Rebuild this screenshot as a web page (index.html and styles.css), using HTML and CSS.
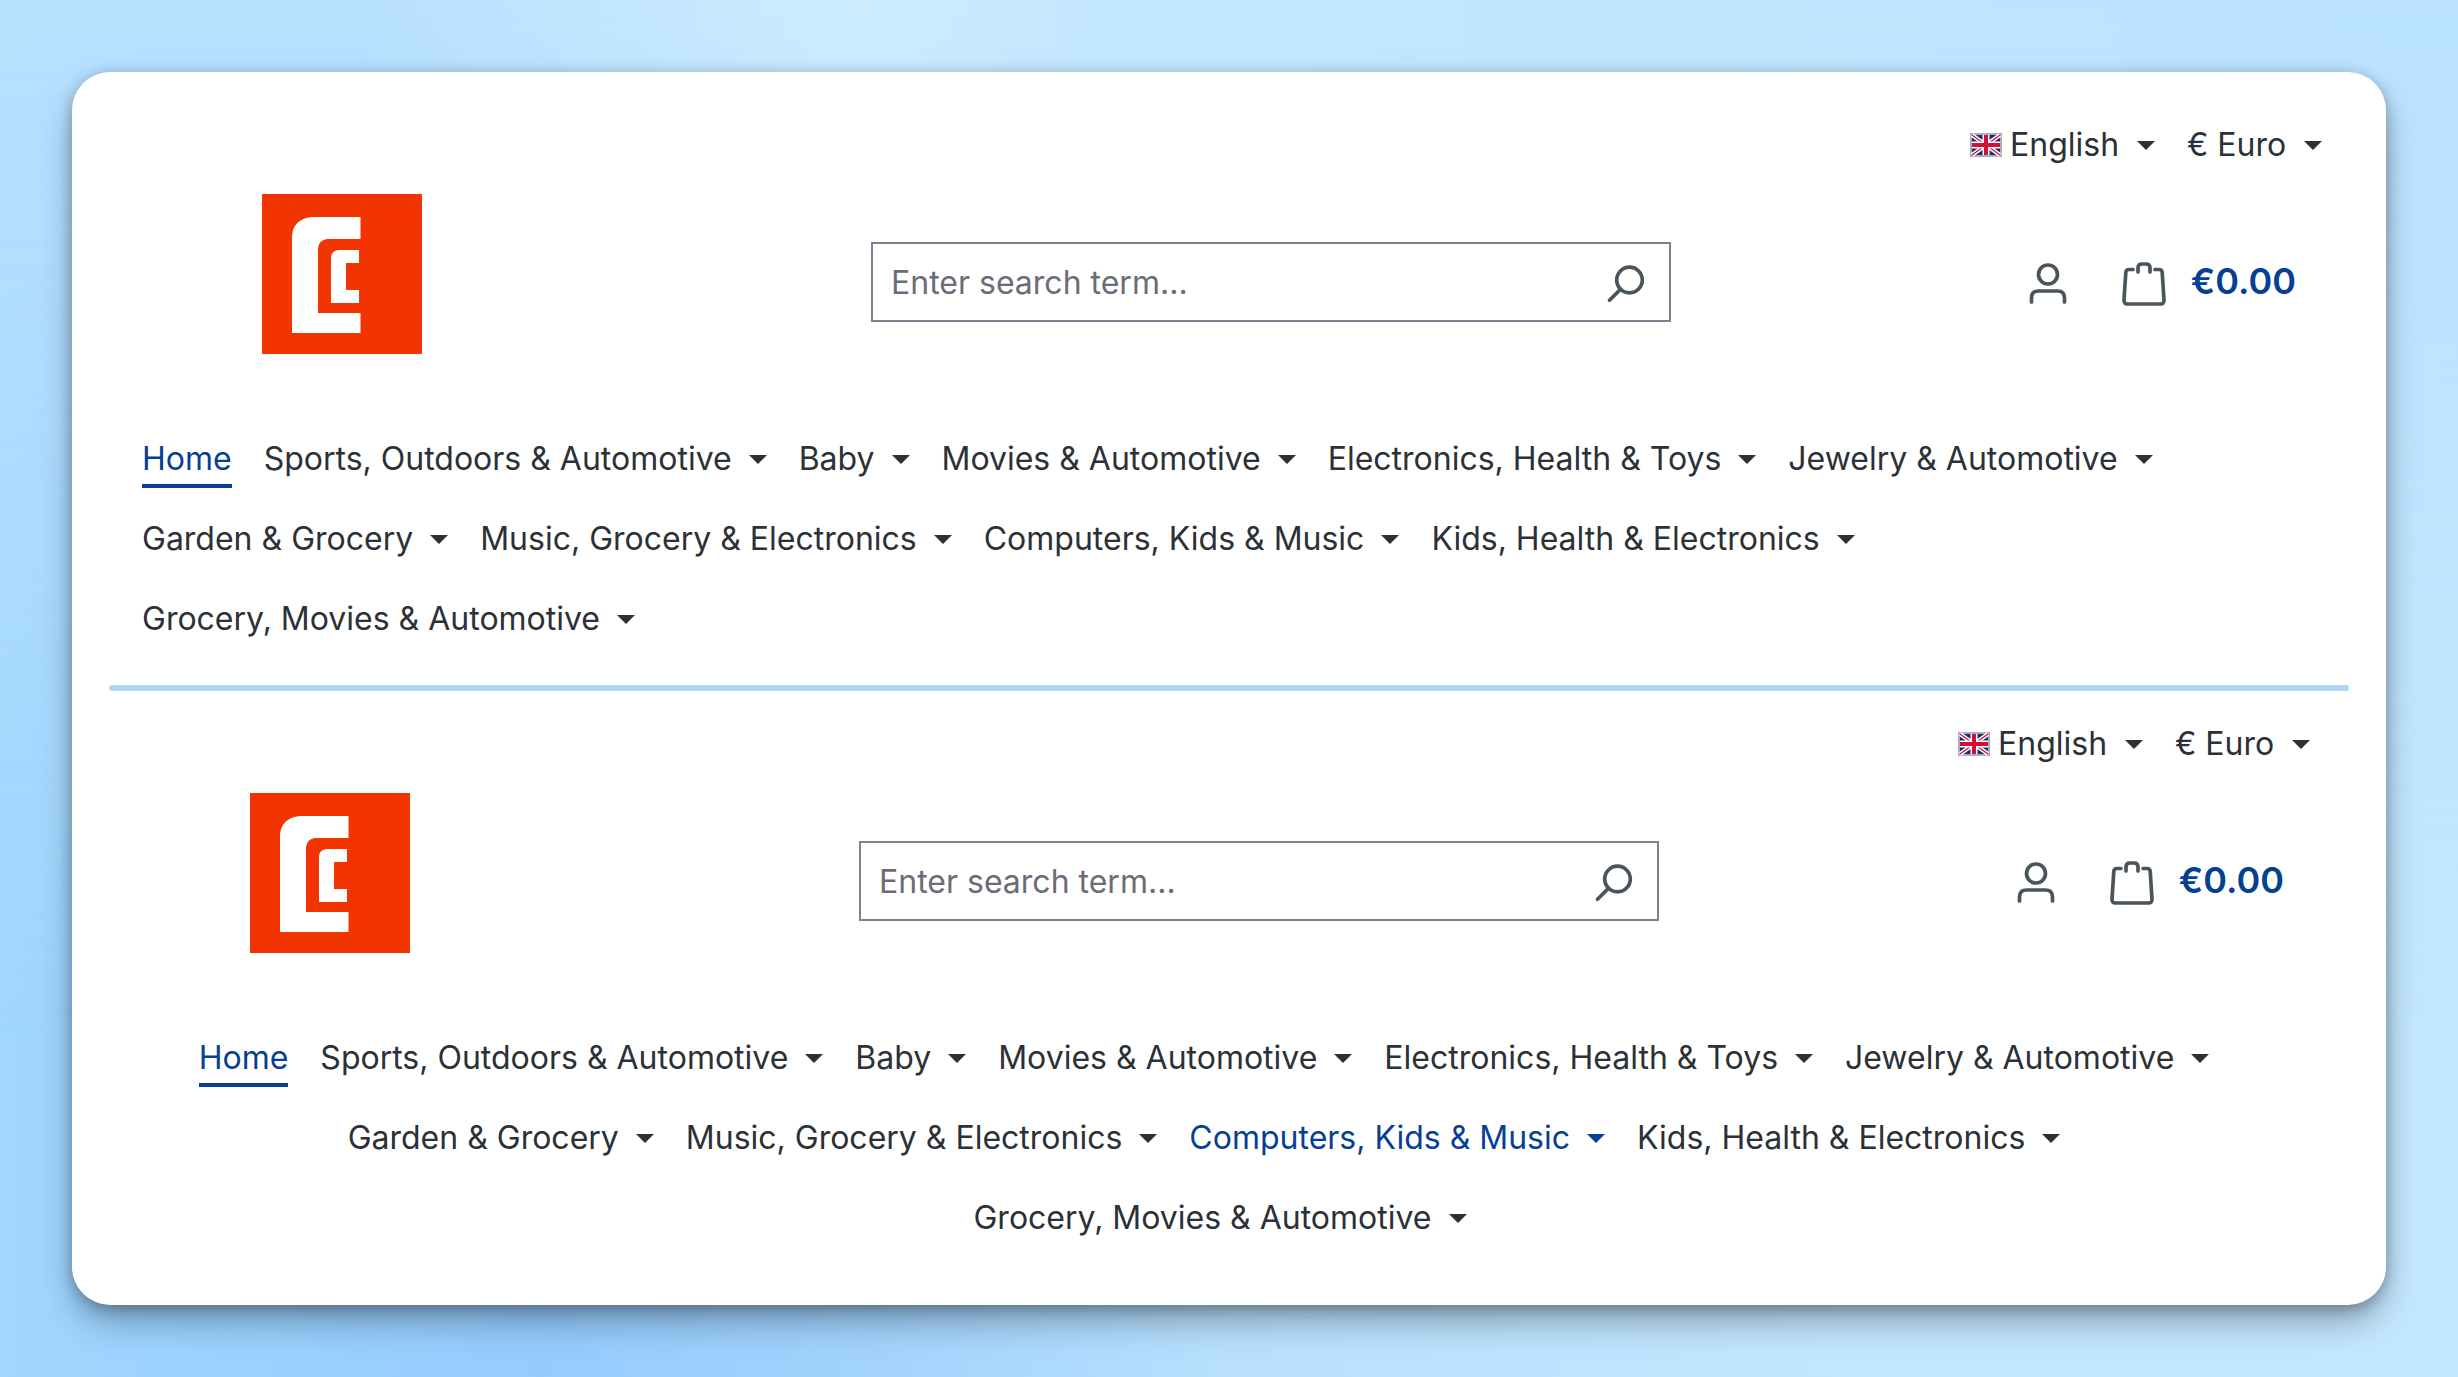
FILE: index.html
```html
<!DOCTYPE html>
<html lang="en">
<head>
    <meta charset="UTF-8">
    <meta name="viewport" content="width=device-width, initial-scale=1.0">
    <title>Navigation alignment</title>
    <link rel="stylesheet" href="styles.css">
</head>
<body>
    <svg class="sprite" aria-hidden="true">
        <symbol id="flag" viewBox="0 0 32 24">
            <rect width="32" height="24" fill="#a9adc4"/>
            <rect x="2" y="2" width="28" height="20" fill="#1f2a66"/>
            <path d="M2 2l28 20M30 2L2 22" stroke="#fff" stroke-width="4"/>
            <path d="M2 2l28 20M30 2L2 22" stroke="#d0103a" stroke-width="1.3"/>
            <path d="M16 2v20M2 12h28" stroke="#fff" stroke-width="7"/>
            <path d="M16 2v20M2 12h28" stroke="#d0103a" stroke-width="4"/>
        </symbol>
        <symbol id="caret" viewBox="0 0 18 9">
            <path d="M0 0h18L9 9z" fill="currentColor"/>
        </symbol>
        <symbol id="logo" viewBox="0 0 160 160">
            <rect width="160" height="160" fill="#f23500"/>
            <path d="M98.500 23H50Q30 25 30 44V139H98.500V119H56V54Q57 46 65 45H98.500z" fill="#fff"/>
            <path d="M97 56H76Q69 57 69 64V109H97V96H84V69H97z" fill="#fff"/>
        </symbol>
        <symbol id="search" viewBox="0 0 40 40">
            <g fill="none" stroke="currentColor" stroke-width="3.700" stroke-linecap="round">
                <circle cx="24.500" cy="17" r="12.800"/>
                <path d="M15.300 26.500L4.500 37.300"/>
            </g>
        </symbol>
        <symbol id="user" viewBox="0 0 44 44">
            <g fill="none" stroke="currentColor" stroke-width="3.700" stroke-linecap="round">
                <circle cx="22" cy="12.500" r="9.500"/>
                <path d="M5.500 40V36Q5.500 29 12.500 29H31.500Q38.500 29 38.500 36V40"/>
            </g>
        </symbol>
        <symbol id="bag" viewBox="0 0 44 44">
            <g fill="none" stroke="currentColor" stroke-width="3.700" stroke-linecap="round" stroke-linejoin="round">
                <path d="M11 7.500H7Q4 7.500 3.800 10.500L2 38Q1.800 42 5.500 42H38.500Q42.200 42 42 38L40.200 10.500Q40 7.500 37 7.500H33"/>
                <path d="M16 10V6Q16 2 20 2H24Q28 2 28 6V10"/>
            </g>
        </symbol>
    </svg>

    <main class="card">
        <section class="shop shop-left">
            <div class="top-bar">
                <label class="switcher">
                    <svg class="flag" aria-hidden="true"><use href="#flag"/></svg>
                    <select aria-label="Language"><option>English</option></select>
                    <svg class="caret" aria-hidden="true"><use href="#caret"/></svg>
                </label>
                <label class="switcher">
                    <select aria-label="Currency"><option>€ Euro</option></select>
                    <svg class="caret" aria-hidden="true"><use href="#caret"/></svg>
                </label>
            </div>
            <header class="header-row">
                <a href="#" class="logo" aria-label="Home page"><svg><use href="#logo"/></svg></a>
                <form class="search">
                    <input type="search" placeholder="Enter search term..." aria-label="Enter search term">
                    <button type="button" aria-label="Search"><svg><use href="#search"/></svg></button>
                </form>
                <div class="actions">
                    <button type="button" aria-label="Your account"><svg><use href="#user"/></svg></button>
                    <a href="#" class="cart"><svg aria-hidden="true"><use href="#bag"/></svg>€0.00</a>
                </div>
            </header>
            <nav aria-label="Main navigation">
                <ul class="nav">
                    <li><a href="#" class="active">Home</a></li>
                    <li><a href="#">Sports, Outdoors &amp; Automotive<svg class="caret"><use href="#caret"/></svg></a></li>
                    <li><a href="#">Baby<svg class="caret"><use href="#caret"/></svg></a></li>
                    <li><a href="#">Movies &amp; Automotive<svg class="caret"><use href="#caret"/></svg></a></li>
                    <li><a href="#">Electronics, Health &amp; Toys<svg class="caret"><use href="#caret"/></svg></a></li>
                    <li><a href="#">Jewelry &amp; Automotive<svg class="caret"><use href="#caret"/></svg></a></li>
                    <li><a href="#">Garden &amp; Grocery<svg class="caret"><use href="#caret"/></svg></a></li>
                    <li><a href="#">Music, Grocery &amp; Electronics<svg class="caret"><use href="#caret"/></svg></a></li>
                    <li><a href="#">Computers, Kids &amp; Music<svg class="caret"><use href="#caret"/></svg></a></li>
                    <li><a href="#">Kids, Health &amp; Electronics<svg class="caret"><use href="#caret"/></svg></a></li>
                    <li><a href="#">Grocery, Movies &amp; Automotive<svg class="caret"><use href="#caret"/></svg></a></li>
                </ul>
            </nav>
        </section>

        <hr class="divider">

        <section class="shop shop-center">
            <div class="top-bar">
                <label class="switcher">
                    <svg class="flag" aria-hidden="true"><use href="#flag"/></svg>
                    <select aria-label="Language"><option>English</option></select>
                    <svg class="caret" aria-hidden="true"><use href="#caret"/></svg>
                </label>
                <label class="switcher">
                    <select aria-label="Currency"><option>€ Euro</option></select>
                    <svg class="caret" aria-hidden="true"><use href="#caret"/></svg>
                </label>
            </div>
            <header class="header-row">
                <a href="#" class="logo" aria-label="Home page"><svg><use href="#logo"/></svg></a>
                <form class="search">
                    <input type="search" placeholder="Enter search term..." aria-label="Enter search term">
                    <button type="button" aria-label="Search"><svg><use href="#search"/></svg></button>
                </form>
                <div class="actions">
                    <button type="button" aria-label="Your account"><svg><use href="#user"/></svg></button>
                    <a href="#" class="cart"><svg aria-hidden="true"><use href="#bag"/></svg>€0.00</a>
                </div>
            </header>
            <nav aria-label="Centered navigation">
                <ul class="nav">
                    <li><a href="#" class="active">Home</a></li>
                    <li><a href="#">Sports, Outdoors &amp; Automotive<svg class="caret"><use href="#caret"/></svg></a></li>
                    <li><a href="#">Baby<svg class="caret"><use href="#caret"/></svg></a></li>
                    <li><a href="#">Movies &amp; Automotive<svg class="caret"><use href="#caret"/></svg></a></li>
                    <li><a href="#">Electronics, Health &amp; Toys<svg class="caret"><use href="#caret"/></svg></a></li>
                    <li><a href="#">Jewelry &amp; Automotive<svg class="caret"><use href="#caret"/></svg></a></li>
                    <li><a href="#">Garden &amp; Grocery<svg class="caret"><use href="#caret"/></svg></a></li>
                    <li><a href="#">Music, Grocery &amp; Electronics<svg class="caret"><use href="#caret"/></svg></a></li>
                    <li><a href="#" class="hover">Computers, Kids &amp; Music<svg class="caret"><use href="#caret"/></svg></a></li>
                    <li><a href="#">Kids, Health &amp; Electronics<svg class="caret"><use href="#caret"/></svg></a></li>
                    <li><a href="#">Grocery, Movies &amp; Automotive<svg class="caret"><use href="#caret"/></svg></a></li>
                </ul>
            </nav>
        </section>
    </main>
</body>
</html>
```
FILE: styles.css
```css
* {
    box-sizing: border-box;
}

body {
    position: relative;
    margin: 0;
    padding: 72px;
    min-height: 100vh;
    font-family: Inter, sans-serif;
    font-size: 32px;
    line-height: 48px;
    color: #2b3136;
    background: linear-gradient(to right, #a0d6ff, #95ccfd 22%, #a3d3fd 36%, #b8e0fe 50%, #c2e6ff 75%, #c3e7ff);
}

/* lighter sky that fades out towards the bottom */
body::before {
    content: "";
    position: absolute;
    inset: 0;
    z-index: -1;
    background: linear-gradient(to right, #b8e0ff, #b8e0ff 15%, #cdecff 35%, #c3e7ff 45%, #bae2ff);
    -webkit-mask-image: linear-gradient(#000, transparent 75%);
    mask-image: linear-gradient(#000, transparent 75%);
}

a {
    color: inherit;
    text-decoration: none;
}

button {
    padding: 0;
    border: 0;
    background: none;
    color: #4a545b;
    cursor: pointer;
}

svg {
    display: block;
    flex: none;
}

.sprite {
    position: absolute;
    width: 0;
    height: 0;
}

.card {
    background: #fff;
    border-radius: 38px;
    padding: 49px 37px 47px;
    box-shadow: 0 18px 36px -4px rgba(0, 0, 0, 0.35), 0 3px 14px rgba(0, 0, 0, 0.25);
}

.shop-left {
    padding: 0 27px 26px 33px;
}

.shop-center {
    padding: 29px 39px 0 21px;
}

.divider {
    height: 6px;
    margin: 0;
    border: 0;
    border-radius: 3px;
    background: #b0d8f6;
}

.top-bar {
    display: flex;
    justify-content: flex-end;
    gap: 32px;
}

.switcher {
    display: flex;
    align-items: center;
}

.switcher select {
    appearance: none;
    padding: 0;
    border: 0;
    background: none;
    font: inherit;
    color: inherit;
}

.flag {
    width: 32px;
    height: 24px;
    margin-right: 8px;
}

.caret {
    width: 18px;
    height: 9px;
    margin-left: 17px;
}

.header-row {
    display: grid;
    grid-template-columns: 400px 1fr 322px;
    padding: 25px 0 65px;
}

.logo {
    justify-self: center;
}

.logo svg {
    width: 160px;
    height: 160px;
}

.search {
    display: flex;
    align-items: center;
    justify-self: center;
    align-self: center;
    width: 100%;
    max-width: 800px;
    height: 80px;
    margin-top: 16px;
    padding: 2px 24px 0 18px;
    border: 2px solid #798490;
}

.search input {
    flex: 1;
    min-width: 0;
    padding: 0;
    border: 0;
    outline: 0;
    font: inherit;
    color: inherit;
    background: none;
}

.search input::placeholder {
    color: #6c6b78;
    opacity: 1;
}

.search svg {
    width: 40px;
    height: 40px;
}

.actions {
    display: flex;
    align-items: center;
    justify-content: flex-end;
    gap: 52px;
    margin-top: 14px;
    padding-right: 26px;
}

.actions svg {
    width: 44px;
    height: 44px;
    margin-top: 6px;
}

.cart {
    display: flex;
    align-items: center;
    gap: 25px;
    font-size: 36px;
    font-weight: 600;
    color: #063f94;
}

.cart svg {
    color: #4a545b;
}

.nav {
    display: flex;
    flex-wrap: wrap;
    margin: 0;
    padding: 0;
    list-style: none;
}

.nav li {
    margin-right: 32px;
    padding: 16px 0 11px;
}

.nav li:last-child {
    margin-right: 0;
}

.nav a {
    display: flex;
    align-items: center;
    padding-bottom: 1px;
    border-bottom: 4px solid transparent;
}

.nav a:hover,
.nav .hover,
.nav .active {
    color: #063f94;
}

.nav .active {
    border-color: #063f94;
}

.shop-center .nav {
    justify-content: center;
}
```
